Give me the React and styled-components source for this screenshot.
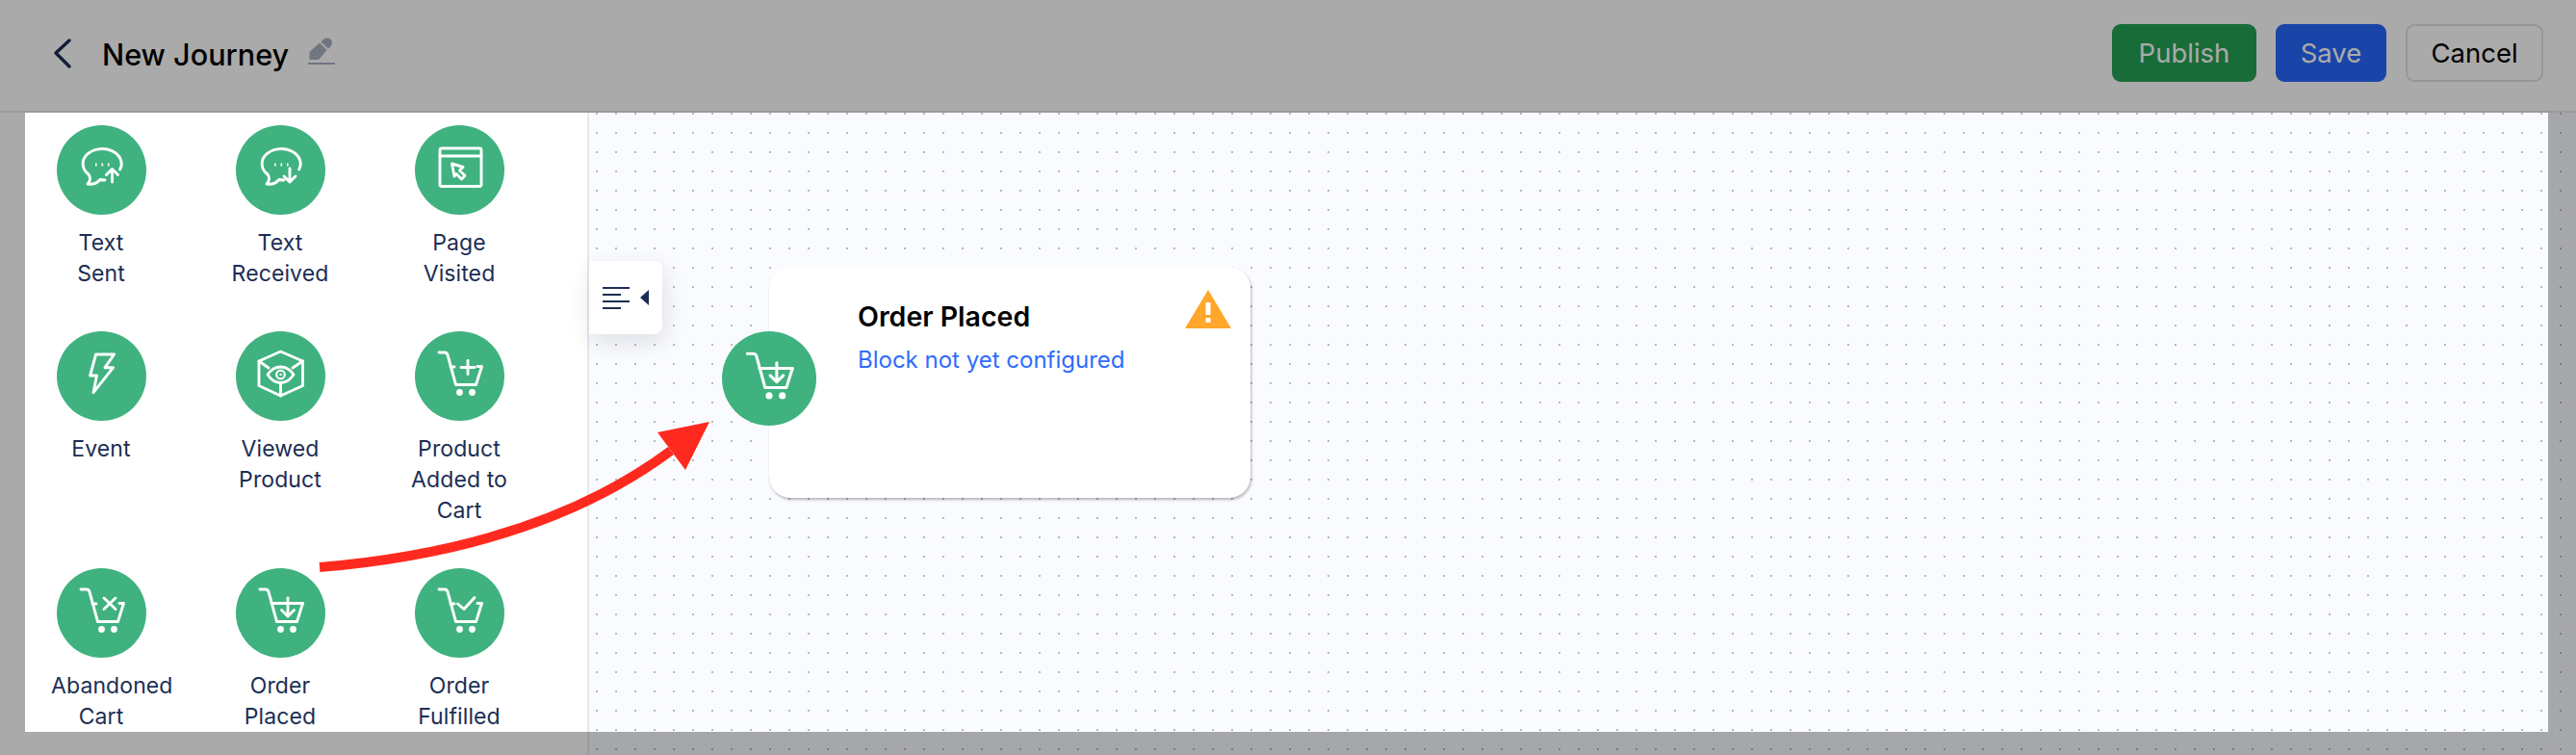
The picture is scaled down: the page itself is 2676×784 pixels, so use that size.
import React from "react";
import styled, { createGlobalStyle } from "styled-components";

const GlobalStyle = createGlobalStyle`
  * {
    box-sizing: border-box;
  }
  html, body {
    margin: 0;
    padding: 0;
    height: 100%;
    background: #fff;
  }
  body {
    font-family: Inter, "Liberation Sans", sans-serif;
    overflow: hidden;
  }
`;

const Page = styled.div`
  position: relative;
  display: flex;
  flex-direction: column;
  width: 2676px;
  height: 784px;
  overflow: hidden;
`;

const Header = styled.header`
  display: flex;
  align-items: center;
  justify-content: space-between;
  flex: 0 0 117px;
  padding: 0 34px 5px 54px;
  background: #fff;
  border-bottom: 2px solid #e8e8ef;
`;

const TitleGroup = styled.div`
  display: flex;
  align-items: center;
`;

const BackButton = styled.svg`
  width: 22px;
  height: 32px;
  margin-right: 30px;
  fill: none;
  stroke: #1c2e54;
  stroke-width: 3.4;
  stroke-linecap: round;
  stroke-linejoin: round;
`;

const Title = styled.h1`
  margin: 3px 20px 0 0;
  font-size: 30.6px;
  line-height: 36px;
  font-weight: 500;
  color: #000;
`;

const EditIcon = styled.svg`
  width: 28px;
  height: 28px;
  margin-top: -5px;
  fill: #a9b0bf;
`;

const Actions = styled.div`
  display: flex;
  gap: 20px;
`;

const Button = styled.button`
  height: 60px;
  width: ${(p) => p.$width}px;
  padding: 0;
  font-family: inherit;
  font-size: 27.5px;
  font-weight: 400;
  border-radius: 9px;
  color: ${(p) => p.$color || "#fff"};
  background: ${(p) => p.$bg};
  border: ${(p) => (p.$outline ? "2px solid #e2e2e6" : "none")};
`;

const Body = styled.main`
  display: flex;
  flex: 1;
  min-height: 0;
`;

const Sidebar = styled.aside`
  flex: 0 0 612px;
  padding: 13px 0 0 12px;
  background: #fff;
  border-right: 2px solid #e4e7ee;
  overflow: hidden;
`;

const BlockGrid = styled.div`
  display: grid;
  grid-template-columns: repeat(3, 186px);
  row-gap: 43px;
`;

const Block = styled.div`
  display: flex;
  flex-direction: column;
  align-items: center;
`;

const Circle = styled.div`
  display: flex;
  flex: 0 0 auto;
  width: ${(p) => p.$size}px;
  height: ${(p) => p.$size}px;
  border-radius: 50%;
  background: #3fb27f;
`;

const IconSvg = styled.svg`
  width: 100%;
  height: 100%;
  fill: none;
  stroke: #fff;
  stroke-width: 2.9;
  stroke-linecap: round;
  stroke-linejoin: round;
`;

// fixed width box: a word wider than it runs out on the right, as "Abandoned" does
const BlockLabel = styled.div`
  width: 104px;
  height: ${(p) => p.$lines * 32}px;
  margin-top: 13px;
  margin-bottom: 1px;
  font-size: 23px;
  line-height: 32px;
  letter-spacing: 0.1px;
  text-align: center;
  color: #1c2e54;
`;

const LabelLine = styled.div`
  white-space: nowrap;
`;

const Canvas = styled.section`
  position: relative;
  flex: 1;
  background-color: #fafbfe;
  background-image: radial-gradient(circle at 1px 1px, #b6b9bc 1.2px, transparent 1.3px);
  background-size: 20px 20px;
  background-position: 7px 0;
`;

const Toggle = styled.div`
  position: absolute;
  left: 0;
  top: 154px;
  display: flex;
  align-items: center;
  gap: 11px;
  width: 76px;
  height: 76px;
  padding-left: 14px;
  background: #fff;
  border-radius: 0 8px 8px 0;
  box-shadow: 2px 8px 22px rgba(30, 40, 70, 0.13);
`;

const ToggleLines = styled.div`
  display: flex;
  flex-direction: column;
  gap: 5px;
`;

const ToggleLine = styled.div`
  width: ${(p) => p.$width}px;
  height: 2px;
  background: #1c2e54;
`;

const ToggleCaret = styled.div`
  width: 0;
  height: 0;
  border-top: 8px solid transparent;
  border-bottom: 8px solid transparent;
  border-right: 9px solid #1c2e54;
`;

const Card = styled.div`
  position: absolute;
  left: 187px;
  top: 160px;
  width: 500px;
  height: 240px;
  padding: 35px 20px 0 92px;
  background: #fff;
  border-radius: 22px;
  box-shadow: 1px 2px 3px rgba(0, 0, 0, 0.28);
`;

const CardHead = styled.div`
  display: flex;
  align-items: flex-start;
  justify-content: space-between;
`;

const CardTitle = styled.div`
  font-size: 28.5px;
  line-height: 34px;
  font-weight: 600;
  color: #000;
`;

const WarningIcon = styled.svg`
  width: 48px;
  height: 40px;
  margin-top: -11px;
`;

const CardNote = styled.div`
  margin-top: 12px;
  font-size: 24px;
  line-height: 32px;
  color: #2f6bff;
`;

const NodeBadge = styled.div`
  position: absolute;
  left: -49px;
  top: 67px;
`;

// darkens everything outside the highlighted area, like a product tour step
const Spotlight = styled.div`
  position: absolute;
  left: 26px;
  top: 117px;
  width: 2621px;
  height: 643px;
  box-shadow: 0 0 0 3000px rgba(0, 0, 0, 0.335);
  pointer-events: none;
`;

const Arrow = styled.svg`
  position: absolute;
  left: 320px;
  top: 430px;
  width: 430px;
  height: 170px;
  pointer-events: none;
`;

const Bubble = () => (
  <>
    <path d="M65.6 46A20 15.5 0 1 0 33 51C35 54 36 57 32 61C38 62 42 60 45 56.5C47 57 49 57 50 57" />
    <path d="M40 41h1.6M46.5 41h1.6M53 41h1.6" strokeWidth="3.2" strokeLinecap="butt" />
  </>
);

const Cart = ({ fullTop }) => (
  <>
    <path d="M25 22H31C32.5 22 33.5 23 34 24.5L42.5 55.5H63.5L69.5 36.5H65" />
    <path d={fullTop ? "M37 36.5H69.5" : "M37 37H41"} />
    <circle cx="46.5" cy="63.5" r="3.4" fill="#fff" stroke="none" />
    <circle cx="59.5" cy="63.5" r="3.4" fill="#fff" stroke="none" />
  </>
);

const icons = {
  textSent: (
    <>
      <Bubble />
      <path d="M57.5 46V59M51.5 51.5L57.5 45.5L63.5 51.5" />
    </>
  ),
  textReceived: (
    <>
      <Bubble />
      <path d="M56 45V59M50 53L56 59L62 53" />
    </>
  ),
  pageVisited: (
    <>
      <rect x="26" y="24" width="43" height="39.5" rx="2" />
      <path d="M26 32H69" />
      <path d="M38.5 40L50 43.5L46.5 47L52 52.5L48.5 56L43 50.5L41 53Z" />
    </>
  ),
  event: <path d="M40.6 24H59.6L50 37.7H58.6L38 63.7L41.5 46H34.6Z" />,
  viewedProduct: (
    <>
      <path d="M46.5 21L69.5 31V56.5L46.5 67L24 56.5V31Z" />
      <path d="M24 31L34 38M69.5 31L59 38M46.5 54V67" />
      <path d="M33 45C37 39 41.5 37 46.5 37S56 39 60 45C56 51 51.5 53.5 46.5 53.5S37 51 33 45Z" />
      <circle cx="46.5" cy="45" r="4.3" strokeWidth="2.2" />
      <circle cx="46.5" cy="45" r="0.8" fill="#fff" strokeWidth="1" />
    </>
  ),
  addedToCart: (
    <>
      <Cart />
      <path d="M55 30.5V44.5M48 37.5H62" />
    </>
  ),
  abandonedCart: (
    <>
      <Cart />
      <path d="M49 31L61 42.5M61 31L49 42.5" />
    </>
  ),
  orderPlaced: (
    <>
      <Cart fullTop />
      <path d="M54 31V49.5M47.5 43.5L54 50L60.5 43.5" />
    </>
  ),
  orderFulfilled: (
    <>
      <Cart />
      <path d="M44.5 37L51 42.5L62 30.5" />
    </>
  ),
};

const BlockIcon = ({ name, size = 93 }) => (
  <Circle $size={size}>
    <IconSvg viewBox="0 0 93 93">{icons[name]}</IconSvg>
  </Circle>
);

const blocks = [
  { icon: "textSent", lines: ["Text", "Sent"] },
  { icon: "textReceived", lines: ["Text", "Received"] },
  { icon: "pageVisited", lines: ["Page", "Visited"] },
  { icon: "event", lines: ["Event"] },
  { icon: "viewedProduct", lines: ["Viewed", "Product"] },
  { icon: "addedToCart", lines: ["Product", "Added to", "Cart"] },
  { icon: "abandonedCart", lines: ["Abandoned", "Cart"] },
  { icon: "orderPlaced", lines: ["Order", "Placed"] },
  { icon: "orderFulfilled", lines: ["Order", "Fulfilled"] },
];

export default function App() {
  return (
    <Page>
      <GlobalStyle />
      <Header>
        <TitleGroup>
          <BackButton viewBox="0 0 22 32">
            <path d="M18 3L4 16L18 30" />
          </BackButton>
          <Title>New Journey</Title>
          <EditIcon viewBox="0 0 28 28">
            <path d="M1.5 23V15L12 5.5L19.5 13L11 23Z" />
            <path d="M13.5 4.2L16.5 1.6C18.5 0 21.5 0 23.5 1.8C25.5 3.8 25.4 7 23.8 9L21 11.8Z" />
            <rect x="0" y="26" width="28" height="2" />
          </EditIcon>
        </TitleGroup>
        <Actions>
          <Button $bg="#24a253" $width={150}>Publish</Button>
          <Button $bg="#2768fc" $width={115}>Save</Button>
          <Button $bg="#fff" $color="#000" $outline $width={143}>Cancel</Button>
        </Actions>
      </Header>
      <Body>
        <Sidebar>
          <BlockGrid>
            {blocks.map((block) => (
              <Block key={block.icon}>
                <BlockIcon name={block.icon} />
                <BlockLabel $lines={block.lines.length}>
                  {block.lines.map((line) => (
                    <LabelLine key={line}>{line}</LabelLine>
                  ))}
                </BlockLabel>
              </Block>
            ))}
          </BlockGrid>
        </Sidebar>
        <Canvas>
          <Toggle>
            <ToggleLines>
              <ToggleLine $width={28} />
              <ToggleLine $width={19} />
              <ToggleLine $width={28} />
              <ToggleLine $width={19} />
            </ToggleLines>
            <ToggleCaret />
          </Toggle>
          <Card>
            <NodeBadge>
              <BlockIcon name="orderPlaced" size={98} />
            </NodeBadge>
            <CardHead>
              <CardTitle>Order Placed</CardTitle>
              <WarningIcon viewBox="0 0 48 40">
                <path d="M24 0L48 40H0Z" fill="#ffa62b" />
                <rect x="21.5" y="13" width="5" height="13" fill="#fff" />
                <rect x="21.5" y="29" width="5" height="5" fill="#fff" />
              </WarningIcon>
            </CardHead>
            <CardNote>Block not yet configured</CardNote>
          </Card>
        </Canvas>
      </Body>
      <Spotlight />
      <Arrow viewBox="320 430 430 170">
        <path d="M332 589Q560 570 697 468" fill="none" stroke="#ff2a1f" strokeWidth="10" />
        <path d="M737 438L683 449L712 488Z" fill="#ff2a1f" />
      </Arrow>
    </Page>
  );
}
